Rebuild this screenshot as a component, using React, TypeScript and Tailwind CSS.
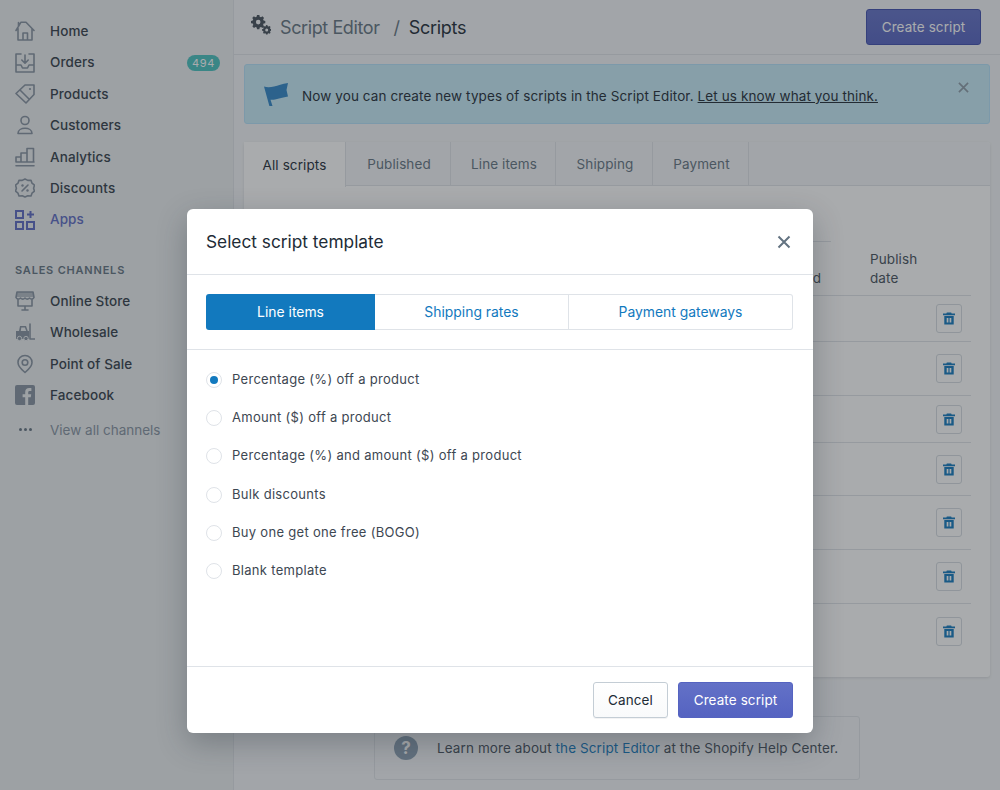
import type { ReactNode } from "react";

const stroke = { fill: "none", stroke: "currentColor", strokeWidth: 1.6, strokeLinejoin: "round" as const, strokeLinecap: "round" as const };

function Icon({ children }: { children: ReactNode }) {
  return (
    <svg viewBox="0 0 20 20" className="w-5 h-5 shrink-0">
      {children}
    </svg>
  );
}

const HomeIcon = () => (
  <Icon>
    <path {...stroke} d="M1 9.500 6 1.200h5l8 8.300M3 7.500V19h14V7.500M3.500 1.500v4M8 19v-7h4.500v7" />
  </Icon>
);
const OrdersIcon = () => (
  <Icon>
    <path {...stroke} d="M6 1H1v18h18V1h-5M1 12h5l1.500 3h5l1.500-3h5M10 2v8M6.800 7 10 10.200 13.200 7" />
  </Icon>
);
const ProductsIcon = () => (
  <Icon>
    <path {...stroke} d="M10 1h9v9.500L11 19 1 9.500zM5.500 6.500l8 8" />
    <circle cx="15" cy="5" r="1.100" fill="currentColor" />
  </Icon>
);
const CustomersIcon = () => (
  <Icon>
    <circle {...stroke} cx="10" cy="5.500" r="4" />
    <path {...stroke} d="M3 18.500c0-7 14-7 14 0z" />
  </Icon>
);
const AnalyticsIcon = () => (
  <Icon>
    <path {...stroke} d="M1 15v-5h5v5M6 15V6h6v9M12 15V1.500h6.500V15M1 15h18M1 18.800h18" />
  </Icon>
);
const DiscountsIcon = () => (
  <Icon>
    <path {...stroke} d="M10 1l2.800 1.400 3.200-.2 1 3 2.500 2-.9 3 .9 3-2.500 2-1 2.800-3.200-.2L10 19l-2.800-1.200-3.200.2-1-2.800-2.500-2 .9-3-.9-3 2.500-2 1-3 3.200.2z" />
    <path {...stroke} d="M13 7l-6 6" />
    <circle cx="7.500" cy="7.500" r="1.200" fill="currentColor" />
    <circle cx="12.500" cy="12.500" r="1.200" fill="currentColor" />
  </Icon>
);
const AppsIcon = () => (
  <Icon>
    <path fill="none" stroke="currentColor" strokeWidth="2" d="M1 1h7v7H1zM1 12h7v7H1zM12 12h7v7h-7z" />
    <path fill="none" stroke="currentColor" strokeWidth="2" d="M15.500 1v7M12 4.500h7" />
  </Icon>
);
const StoreIcon = () => (
  <Icon>
    <path {...stroke} d="M2 1h16l1 5.500c-1 2-3 2-4.500.500-1.500 1.500-3 1.500-4.500 0-1.500 1.500-3 1.500-4.500 0C4 8.500 2 8.500 1 6.500zM3 8.500V15h14V8.500M7 19h6M10 15v4" />
    <path fill="currentColor" d="M2 1h16l1 5H1z" opacity=".55" />
  </Icon>
);
const WholesaleIcon = () => (
  <Icon>
    <path fill="currentColor" d="M1 9h3l1-5h6l1.800 5H14v8H1zM6.300 5.500 5.800 9h5.400l-1.300-3.500z" />
    <path {...stroke} d="M15 2v15h4.500" />
    <circle cx="4.500" cy="16.500" r="2.200" fill="currentColor" stroke="#ebeef0" strokeWidth="1" />
    <circle cx="11" cy="16.500" r="2.200" fill="currentColor" stroke="#ebeef0" strokeWidth="1" />
  </Icon>
);
const PinIcon = () => (
  <Icon>
    <path {...stroke} d="M10 1.500c-4 0-7 3-7 7 0 4 4 7.500 7 10 3-2.500 7-6 7-10 0-4-3-7-7-7z" />
    <circle {...stroke} cx="10" cy="8.500" r="2.800" />
  </Icon>
);
const FacebookIcon = () => (
  <Icon>
    <path
      fill="currentColor"
      fillRule="evenodd"
      d="M2 0h16a2 2 0 0 1 2 2v16a2 2 0 0 1-2 2h-4.800v-7.700h2.600l.4-3h-3V7.400c0-.9.300-1.500 1.500-1.500H16.400V3.200c-.3 0-1.200-.1-2.300-.1-2.300 0-3.900 1.400-3.900 4v2.200H7.600v3h2.600V20H2a2 2 0 0 1-2-2V2a2 2 0 0 1 2-2z"
    />
  </Icon>
);

function NavRow({ icon, label, className, badge }: { icon: ReactNode; label: string; className?: string; badge?: string }) {
  return (
    <div className={`h-[31.4px] flex items-center ${className ?? "text-[#8592a0]"}`}>
      {icon}
      <span className={`ml-[15px] text-[13.5px] font-medium tracking-[0.1px] ${className ? "" : "text-[#323d49]"}`}>{label}</span>
      {badge && (
        <span className="ml-auto mr-[13px] h-4 w-[33px] rounded-full bg-[#47c1bf] text-[11px] leading-4 text-center text-white tracking-[0.6px]">
          {badge}
        </span>
      )}
    </div>
  );
}

function Sidebar() {
  return (
    <aside className="w-[234px] shrink-0 bg-[#ebeef0] border-r border-[#dfe3e8] pl-[15px] pt-[15.5px]">
      <NavRow icon={<HomeIcon />} label="Home" />
      <NavRow icon={<OrdersIcon />} label="Orders" badge="494" />
      <NavRow icon={<ProductsIcon />} label="Products" />
      <NavRow icon={<CustomersIcon />} label="Customers" />
      <NavRow icon={<AnalyticsIcon />} label="Analytics" />
      <NavRow icon={<DiscountsIcon />} label="Discounts" />
      <NavRow icon={<AppsIcon />} label="Apps" className="text-[#5c6ac4]" />
      <div className="mt-[27px] mb-[7px] h-[16px] text-[11px] leading-4 font-semibold tracking-[0.8px] text-[#637381]">SALES CHANNELS</div>
      <NavRow icon={<StoreIcon />} label="Online Store" />
      <NavRow icon={<WholesaleIcon />} label="Wholesale" />
      <NavRow icon={<PinIcon />} label="Point of Sale" />
      <NavRow icon={<FacebookIcon />} label="Facebook" />
      <div className="mt-[3.5px] h-[31px] flex items-center text-[#8592a0]">
        <span className="w-5 flex justify-center gap-[2px]">
          <i className="w-[3px] h-[3px] rounded-full bg-[#637381]" />
          <i className="w-[3px] h-[3px] rounded-full bg-[#637381]" />
          <i className="w-[3px] h-[3px] rounded-full bg-[#637381]" />
        </span>
        <span className="ml-[15px] text-[13.5px]">View all channels</span>
      </div>
    </aside>
  );
}

function TrashIcon() {
  return (
    <svg viewBox="0 0 14 14" className="w-[12px] h-[13px]">
      <path fill="#1279be" fillRule="evenodd" d="M4.500 0h5l.6 1.300H14V3.200H0V1.300h3.900zM1.500 4.200h11V14h-11zM4.300 6.300v5.500h2V6.300zM7.700 6.300v5.500h2V6.300z" />
    </svg>
  );
}

const rows = ["h-[46px]", "h-[54px]", "h-[47px]", "h-[53px]", "h-[54px]", "h-[54px]", "h-[54px]"];
const tabs = [
  { label: "All scripts", width: "w-[102px]" },
  { label: "Published", width: "w-[105px]" },
  { label: "Line items", width: "w-[105px]" },
  { label: "Shipping", width: "w-[97px]" },
  { label: "Payment", width: "w-[96px]" },
];

function ScriptsCard() {
  return (
    <section className="mt-[18px] mx-[10px] h-[535px] bg-white rounded-[3px] shadow-[0_1px_3px_rgba(63,63,68,0.15)]">
      <div className="flex h-[44px] bg-[#f4f6f8] border-b border-[#dfe3e8] rounded-t-[3px]">
        {tabs.map((tab, i) => (
          <div
            key={tab.label}
            className={`${tab.width} flex items-center justify-center pt-[2px] text-[13.5px] tracking-[0.1px] border-r border-[#dfe3e8] ${i === 0 ? "bg-white h-[45px] text-[#212b36]" : "pl-[2px] text-[#637381]"}`}
          >
            {tab.label}
          </div>
        ))}
      </div>
      <div className="mx-[19px] mt-[55px]">
        <div className="w-[568px] border-t border-[#dfe3e8]" />
        <div className="flex h-[54px] items-end pb-[7px] border-b border-[#dfe3e8] text-[13.5px] leading-[19px] tracking-[0.1px] text-[#454f5b]">
          <span className="ml-[505px] w-[102px]">Last<br />updated</span>
          <span>Publish<br />date</span>
        </div>
        {rows.map((height, i) => (
          <div key={i} className={`${height} flex items-center justify-end pr-[9px] ${i < rows.length - 1 ? "border-b border-[#dfe3e8]" : ""}`}>
            <button className="w-[26px] h-[29px] flex items-center justify-center rounded-[3px] border border-[#d5dbe1] bg-white">
              <TrashIcon />
            </button>
          </div>
        ))}
      </div>
    </section>
  );
}

const templates = [
  "Percentage (%) off a product",
  "Amount ($) off a product",
  "Percentage (%) and amount ($) off a product",
  "Bulk discounts",
  "Buy one get one free (BOGO)",
  "Blank template",
];

function TemplateModal() {
  return (
    <div className="absolute inset-0 bg-[#272c33]/40">
      <div className="absolute left-[187px] top-[209px] w-[626px] h-[524px] flex flex-col bg-white rounded-[6px] shadow-[0_10px_30px_rgba(33,43,54,0.3)]">
        <div className="h-[66px] shrink-0 flex items-center justify-between pl-[19px] pr-[22px] border-b border-[#dfe3e8]">
          <h2 className="text-[17.3px] text-[#212b36]">Select script template</h2>
          <svg viewBox="0 0 14 14" className="w-[14px] h-[14px]">
            <path d="M1.500 1.500l11 11M12.500 1.500l-11 11" stroke="#637381" strokeWidth="2" fill="none" />
          </svg>
        </div>
        <div className="h-[75px] shrink-0 px-[19px] pt-[19px] border-b border-[#dfe3e8]">
          <div className="flex h-[36px] text-[13.9px]">
            <div className="w-[169px] flex items-center justify-center bg-[#1279be] text-white rounded-l-[3px]">Line items</div>
            <div className="w-[194px] flex items-center justify-center text-[#1279be] border-y border-r border-[#dfe3e8]">Shipping rates</div>
            <div className="w-[224px] flex items-center justify-center text-[#1279be] border-y border-r border-[#dfe3e8] rounded-r-[3px]">Payment gateways</div>
          </div>
        </div>
        <div className="flex-1 px-[19px] pt-[10.5px]">
          {templates.map((label, i) => (
            <label key={label} className="h-[38.300px] flex items-center gap-[10px] text-[13px] tracking-[0.3px] text-[#3d4752]">
              <span className="w-4 h-4 shrink-0 rounded-full border border-[#dfe3e8] bg-white flex items-center justify-center">
                {i === 0 && <span className="w-2 h-2 rounded-full bg-[#1279be]" />}
              </span>
              {label}
            </label>
          ))}
        </div>
        <div className="h-[67px] shrink-0 border-t border-[#dfe3e8] flex items-center justify-end gap-[10px] pr-[20px]">
          <button className="w-[75px] h-[36px] rounded-[3px] border border-[#c4cdd5] bg-linear-to-b from-white to-[#f9fafb] text-[13.5px] tracking-[0.1px] text-[#212b36] shadow-[0_1px_0_rgba(22,29,37,0.05)]">
            Cancel
          </button>
          <button className="w-[115px] h-[36px] rounded-[3px] bg-linear-to-b from-[#6371c7] to-[#5563c1] border border-[#5563c1] text-[13.5px] tracking-[0.1px] text-white">
            Create script
          </button>
        </div>
      </div>
    </div>
  );
}

export default function App() {
  return (
    <div className="relative w-[1000px] h-[790px] overflow-hidden flex bg-[#f4f6f8] font-['Inter',sans-serif]">
      <Sidebar />
      <main className="flex-1 min-w-0">
        {/* Title bar */}
        <header className="h-[55px] flex items-center justify-between pl-[17px] pr-[19px] border-b border-[#dfe3e8]">
          <div className="flex items-center text-[18px] tracking-[-0.3px]">
            <svg viewBox="0 0 20 20" className="w-5 h-5 -mt-1 text-[#454f5b]">
              <path fill="currentColor" fillRule="evenodd" d="M6 0h2.400l.3 1.700 1.300.5 1.400-1 1.700 1.700-1 1.400.5 1.300 1.700.3v2.400l-1.700.3-.5 1.300 1 1.400-1.700 1.700-1.400-1-1.300.5-.3 1.700H6l-.3-1.700-1.300-.5-1.400 1-1.700-1.700 1-1.400-.5-1.300L0 8.300V5.900l1.700-.3.5-1.300-1-1.400L2.900 1.200l1.400 1 1.300-.5zM7.200 4.800a2.300 2.300 0 1 0 0 4.600 2.300 2.300 0 0 0 0-4.600z" />
              <path fill="currentColor" fillRule="evenodd" d="M15 10l1.500.2.300 1 .9.400.9-.6 1 1.100-.6.900.4.900 1 .2v1.600l-1 .2-.4.900.6.900-1 1-.9-.5-.9.3-.3 1.100h-1.500l-.2-1-.9-.4-.9.5-1-1 .5-.9-.3-.9-1.100-.2v-1.600l1.100-.2.3-.9-.5-.9 1-1.100.9.6.9-.4zM15.700 13.500a1.500 1.500 0 1 0 0 3 1.500 1.500 0 0 0 0-3z" />
            </svg>
            <span className="ml-[9px] text-[#637381] tracking-[-0.4px]">Script Editor</span>
            <span className="ml-[14px] text-[#637381]">/</span>
            <span className="ml-[9px] text-[#212b36]">Scripts</span>
          </div>
          <button className="w-[115px] h-[36px] rounded-[3px] bg-linear-to-b from-[#6371c7] to-[#5563c1] border border-[#3f4eae] text-[13.5px] tracking-[0.1px] text-white">
            Create script
          </button>
        </header>

        {/* Announcement */}
        <div className="relative mt-[9px] mx-[10px] h-[60px] flex items-center rounded-[3px] bg-[#c7ecf8] border border-[#b4e1fa] pl-[19px] pt-[4px] text-[13.5px] tracking-[0.1px] text-[#212b36]">
          <svg viewBox="0 0 24 24" className="w-[24px] h-[24px] -mt-[4px] shrink-0 text-[#2f86c9]">
            <path fill="currentColor" d="M0 4.500c3 1 6.500.8 10 0 4-1 8-2.500 14-3.500l-1.500 7 1.500 6.500c-5 .8-9 2-13 3-1.500.3-3 .4-4.500.2L8.500 24l-3 .5z" />
          </svg>
          <span className="ml-[14px]">
            Now you can create new types of scripts in the Script Editor. <span className="underline">Let us know what you think.</span>
          </span>
          <svg viewBox="0 0 12 12" className="absolute right-[20px] top-[17px] w-[11px] h-[11px]">
            <path d="M1 1l10 10M11 1L1 11" stroke="#8c9ba8" strokeWidth="1.800" fill="none" />
          </svg>
        </div>

        <ScriptsCard />

        {/* Help footer */}
        <div className="mt-[39px] ml-[140px] w-[486px] h-[64px] flex items-center border border-[#dfe3e8] rounded-[3px] pl-[19px] text-[13.5px] tracking-[0.1px] text-[#454f5b]">
          <span className="w-6 h-6 shrink-0 rounded-full bg-[#8a9fb3] text-white text-[17px] font-bold leading-6 text-center">?</span>
          <span className="ml-[19px]">
            Learn more about <span className="text-[#1279be]">the Script Editor</span> at the Shopify Help Center.
          </span>
        </div>
      </main>
      <TemplateModal />
    </div>
  );
}
